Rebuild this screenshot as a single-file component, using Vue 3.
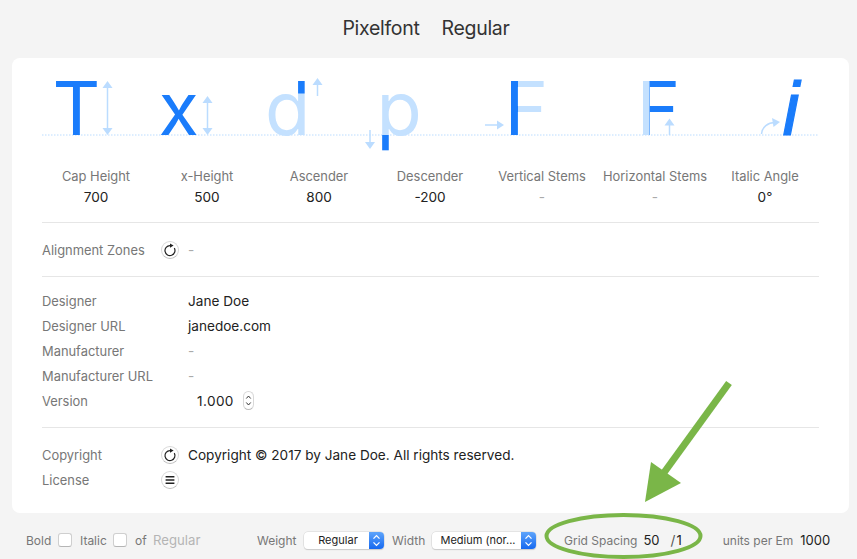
<script setup>
const metrics = [
  { label: 'Cap Height', value: '700' },
  { label: 'x-Height', value: '500' },
  { label: 'Ascender', value: '800' },
  { label: 'Descender', value: '-200' },
  { label: 'Vertical Stems', value: '-', empty: true },
  { label: 'Horizontal Stems', value: '-', empty: true },
  { label: 'Italic Angle', value: '0°' }
]

const people = [
  { label: 'Designer', value: 'Jane Doe' },
  { label: 'Designer URL', value: 'janedoe.com' },
  { label: 'Manufacturer', value: '-', empty: true },
  { label: 'Manufacturer URL', value: '-', empty: true }
]
</script>

<template>
  <div class="page">
    <header class="title">
      <span>Pixelfont</span>
      <span>Regular</span>
    </header>

    <main class="card">
      <svg class="glyphs" viewBox="42 58 777 96" width="777" height="96">
        <defs>
          <clipPath id="clip-d"><rect x="290" y="70" width="20" height="23.5" /></clipPath>
          <clipPath id="clip-p"><rect x="375" y="135" width="20" height="20" /></clipPath>
          <clipPath id="clip-stem"><rect x="505" y="75" width="13" height="65" /></clipPath>
          <clipPath id="clip-bars"><rect x="649.5" y="75" width="35" height="65" /></clipPath>
        </defs>

        <line class="baseline" x1="42" y1="135" x2="819" y2="135" />

        <text class="glyph dark" x="52.5" y="135">T</text>
        <text class="glyph dark" x="158.5" y="135">x</text>

        <text class="glyph light" x="265" y="135">d</text>
        <text class="glyph dark" x="265" y="135" clip-path="url(#clip-d)">d</text>

        <text class="glyph light" x="376.5" y="135">p</text>
        <text class="glyph dark" x="376.5" y="135" clip-path="url(#clip-p)">p</text>

        <text class="glyph light" x="504.5" y="135">F</text>
        <text class="glyph dark" x="504.5" y="135" clip-path="url(#clip-stem)">F</text>

        <text class="glyph light" x="636.5" y="135">F</text>
        <text class="glyph dark" x="636.5" y="135" clip-path="url(#clip-bars)">F</text>

        <text class="glyph dark italic" x="782.5" y="135">i</text>

        <g class="marks">
          <!-- cap height -->
          <line x1="107.5" y1="87" x2="107.5" y2="129" />
          <polygon points="107.5,81 102.5,88 112.5,88" />
          <polygon points="107.5,135 102.5,128 112.5,128" />
          <!-- x-height -->
          <line x1="207.5" y1="101" x2="207.5" y2="130" />
          <polygon points="207.5,96 202.5,103 212.5,103" />
          <polygon points="207.5,135 202.5,128 212.5,128" />
          <!-- ascender -->
          <line x1="317.5" y1="84" x2="317.5" y2="96" />
          <polygon points="317.5,78 312.5,85 322.5,85" />
          <!-- descender -->
          <line x1="370" y1="130" x2="370" y2="143" />
          <polygon points="370,149 365,142 375,142" />
          <!-- vertical stem -->
          <line x1="485" y1="125" x2="498" y2="125" />
          <polygon points="504,125 497,120.5 497,129.5" />
          <!-- horizontal stem -->
          <line x1="669.5" y1="124" x2="669.5" y2="135" />
          <polygon points="669.5,118.5 664.5,125.5 674.5,125.5" />
          <!-- italic angle -->
          <path class="curve" d="M761.5 134 C762 127 768 122.5 775 122.5" />
          <polygon points="780,122 772,118 773.5,127" />
        </g>
      </svg>

      <section class="metrics">
        <div v-for="m in metrics" :key="m.label" class="metric">
          <div class="label">{{ m.label }}</div>
          <div class="value" :class="{ empty: m.empty }">{{ m.value }}</div>
        </div>
      </section>

      <section class="zones">
        <div class="row">
          <span class="label">Alignment Zones</span>
          <button class="round">
            <svg viewBox="0 0 14 14" width="14" height="14">
              <path d="M11.3 5.1 A5 5 0 1 1 7 2.6" fill="none" stroke="#222" stroke-width="1.2" />
              <polygon points="7,0.4 10.6,2.6 7,4.8" fill="#222" />
            </svg>
          </button>
          <span class="value empty">-</span>
        </div>
      </section>

      <section class="people">
        <div v-for="p in people" :key="p.label" class="row">
          <span class="label">{{ p.label }}</span>
          <span class="value" :class="{ empty: p.empty }">{{ p.value }}</span>
        </div>
        <div class="row">
          <span class="label">Version</span>
          <span class="value version">1.000</span>
          <span class="stepper">
            <svg viewBox="0 0 11 19" width="11" height="19">
              <path d="M3.3 7.5 L5.5 5 L7.7 7.5" fill="none" stroke="#333" stroke-width="1" />
              <path d="M3.3 11.5 L5.5 14 L7.7 11.5" fill="none" stroke="#333" stroke-width="1" />
            </svg>
          </span>
        </div>
      </section>

      <section class="legal">
        <div class="row">
          <span class="label">Copyright</span>
          <button class="round">
            <svg viewBox="0 0 14 14" width="14" height="14">
              <path d="M11.3 5.1 A5 5 0 1 1 7 2.6" fill="none" stroke="#222" stroke-width="1.2" />
              <polygon points="7,0.4 10.6,2.6 7,4.8" fill="#222" />
            </svg>
          </button>
          <span class="value">Copyright © 2017 by Jane Doe. All rights reserved.</span>
        </div>
        <div class="row">
          <span class="label">License</span>
          <button class="round">
            <svg viewBox="0 0 14 14" width="14" height="14">
              <path d="M2.6 3.8 H11.4 M2.6 7 H11.4 M2.6 10.2 H11.4" stroke="#222" stroke-width="1.4" />
            </svg>
          </button>
        </div>
      </section>
    </main>

    <footer class="bar">
      <span class="label slot bold-label">Bold</span>
      <span class="check"></span>
      <span class="label slot italic-label">Italic</span>
      <span class="check"></span>
      <span class="label slot of">of</span>
      <span class="style-link">Regular</span>

      <span class="label weight">Weight</span>
      <span class="select weight-select">
        <span class="select-text">Regular</span>
        <span class="select-btn">
          <svg viewBox="0 0 15 17" width="15" height="17">
            <path d="M4.5 6.6 L7.5 3.6 L10.5 6.6 M4.5 10.4 L7.5 13.4 L10.5 10.4" fill="none" stroke="#fff" stroke-width="1.3" />
          </svg>
        </span>
      </span>
      <span class="label width">Width</span>
      <span class="select width-select">
        <span class="select-text">Medium (nor...</span>
        <span class="select-btn">
          <svg viewBox="0 0 15 17" width="15" height="17">
            <path d="M4.5 6.6 L7.5 3.6 L10.5 6.6 M4.5 10.4 L7.5 13.4 L10.5 10.4" fill="none" stroke="#fff" stroke-width="1.3" />
          </svg>
        </span>
      </span>

      <span class="label grid-label">Grid Spacing</span>
      <span class="value grid-main">50</span>
      <span class="grid-slash">/</span>
      <span class="value">1</span>

      <span class="label upm">units per Em</span>
      <span class="value upm-value">1000</span>
    </footer>

    <!-- green annotation drawn over the window -->
    <svg class="annotation" viewBox="0 0 857 559" width="857" height="559">
      <ellipse cx="623.5" cy="536" rx="77" ry="21" fill="none" stroke="#7ab648" stroke-width="4" />
      <line x1="729" y1="383" x2="663" y2="474" stroke="#7ab648" stroke-width="7" />
      <polygon points="645,502 651,462 681,483" fill="#7ab648" />
    </svg>
  </div>
</template>

<style>
html,
body {
  margin: 0;
  overflow: hidden;
}
</style>

<style scoped>
.page {
  position: relative;
  width: 857px;
  height: 559px;
  overflow: hidden;
  background: #f4f4f4;
  font-family: Inter, "Liberation Sans", sans-serif;
  font-size: 13.6px;
  color: #222;
}

.title {
  height: 58px;
  padding: 0 5px 2px 0;
  display: flex;
  justify-content: center;
  align-items: center;
  gap: 22px;
  font-size: 19.5px;
  letter-spacing: -0.3px;
  color: #333;
  box-sizing: border-box;
}

.card {
  height: 455px;
  box-sizing: border-box;
  margin: 0 8px 0 12px;
  padding: 0 30px;
  background: #fff;
  border-radius: 8px;
}

.glyphs {
  display: block;
}

.baseline {
  stroke: #bbdcff;
  stroke-width: 1;
  stroke-dasharray: 1.5 1.5;
}

.glyph {
  font-family: Inter, sans-serif;
  font-size: 74px;
  font-weight: 400;
}

.dark {
  fill: #1a7cfb;
}

.light {
  fill: #c4e1ff;
}

.italic {
  font-family: "Liberation Sans", sans-serif;
  font-size: 76px;
  font-style: italic;
  stroke: #1a7cfb;
  stroke-width: 1.2px;
}

.marks line {
  stroke: #bbdcff;
  stroke-width: 1.5;
}

.marks polygon {
  fill: #bbdcff;
}

.curve {
  fill: none;
  stroke: #bbdcff;
  stroke-width: 1.5;
}

.label {
  color: #777;
  font-size: 12.9px;
  white-space: nowrap;
}

.value {
  color: #222;
  white-space: nowrap;
}

.empty {
  color: #aaa;
}

.metrics {
  display: grid;
  grid-template-columns: 108px 114px 110px 112px 112px 114px 106px;
  margin-top: 12px;
  padding-bottom: 15px;
  border-bottom: 1px solid #e6e6e6;
  text-align: center;
  line-height: 20px;
}

.metric .label {
  padding-top: 1px;
}

.row {
  display: flex;
  align-items: center;
  height: 25px;
}

.row .label {
  width: 119px;
  flex: none;
  padding-top: 2px;
}

.row .value {
  margin-left: 27px;
}

.round {
  width: 18px;
  height: 18px;
  flex: none;
  padding: 0;
  display: flex;
  align-items: center;
  justify-content: center;
  background: #fff;
  border: 1px solid #d8d8d8;
  border-bottom-color: #bdbdbd;
  border-radius: 50%;
}

.row .round + .value {
  margin-left: 9px;
}

.zones {
  padding: 14px 0;
  border-bottom: 1px solid #e6e6e6;
}

.people {
  padding: 11px 0 14px;
  border-bottom: 1px solid #e6e6e6;
}

.row .version {
  margin-left: 36px;
  letter-spacing: 0.4px;
}

.stepper {
  width: 11px;
  height: 19px;
  margin-left: 9px;
  background: #fff;
  border: 1px solid #d8d8d8;
  border-bottom-color: #bdbdbd;
  border-radius: 6px;
  box-sizing: border-box;
  display: flex;
  justify-content: center;
  align-items: center;
}

.stepper svg {
  flex: none;
}

.legal {
  padding-top: 14px;
}

.bar {
  height: 46px;
  box-sizing: border-box;
  padding: 8px 0 0 26px;
  display: flex;
  align-items: center;
}

.bar .label {
  font-size: 12px;
}

.bar .value {
  font-size: 13px;
}

.check {
  width: 14px;
  height: 14px;
  flex: none;
  background: #fff;
  border: 1px solid #cfcfcf;
  border-bottom-color: #b5b5b5;
  border-radius: 3px;
  box-sizing: border-box;
}

.slot {
  flex: none;
}

.bold-label {
  width: 32px;
}

.italic-label {
  width: 33px;
  margin-left: 8px;
}

.of {
  width: 18px;
  margin-left: 8px;
}

.style-link {
  width: 104px;
  flex: none;
  font-size: 13.2px;
  color: #b4b4b4;
  white-space: nowrap;
}

.weight {
  width: 47px;
  flex: none;
}

.select {
  height: 17px;
  flex: none;
  display: flex;
  background: #fff;
  border-radius: 4px;
  box-shadow: 0 0 0 0.5px #d4d4d4, 0 1px 1px rgba(0, 0, 0, 0.2);
  font-size: 11px;
  color: #222;
  line-height: 17px;
  overflow: hidden;
}

.weight-select {
  width: 80px;
}

.width-select {
  width: 104px;
}

.select-text {
  flex: 1;
  padding-left: 3px;
  text-align: center;
  white-space: nowrap;
}

.select-btn {
  width: 15px;
  flex: none;
  background: linear-gradient(#5ea4fb, #1669f0);
}

.select-btn svg {
  display: block;
}

.width {
  width: 40px;
  flex: none;
  margin-left: 8px;
}

.grid-label {
  margin-left: 28px;
}

.grid-main {
  margin-left: 6px;
}

.grid-slash {
  margin-left: 11px;
  margin-right: 1px;
  color: #555;
}

.upm {
  margin-left: 41px;
}

.upm-value {
  margin-left: 7px;
}

.annotation {
  position: absolute;
  left: 0;
  top: 0;
  pointer-events: none;
}
</style>
